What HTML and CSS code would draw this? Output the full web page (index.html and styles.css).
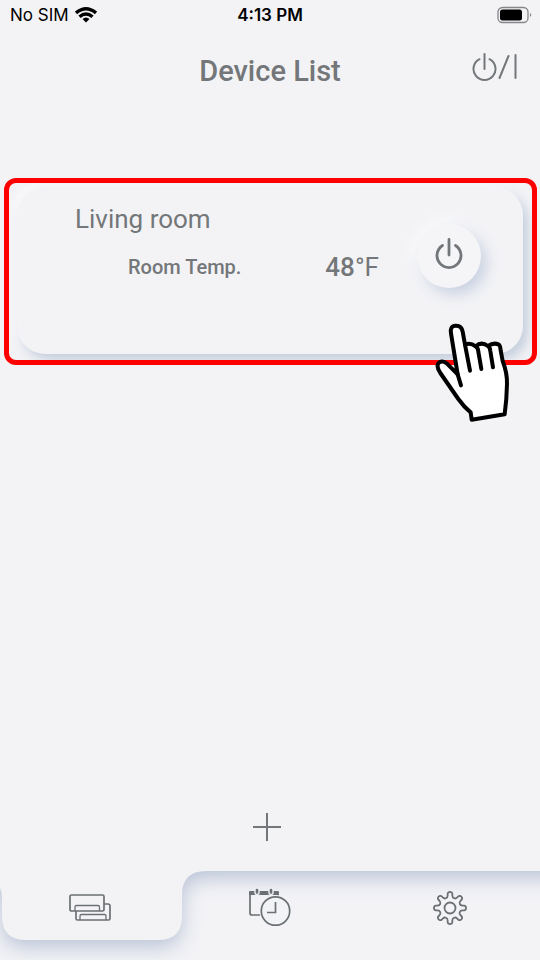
FILE: index.html
```html
<!DOCTYPE html>
<html lang="en">
<head>
<meta charset="utf-8">
<meta name="viewport" content="width=device-width, initial-scale=1">
<title>Device List</title>
<link rel="stylesheet" href="styles.css">
</head>
<body>
<div class="status">
  <div class="carrier">
    <span>No SIM</span>
    <svg width="22" height="16" viewBox="0 0 22 16" fill="none" stroke="#000" stroke-width="3.400">
      <path d="M1 6Q11-2.400 21 6M4.500 9.800Q11 4.300 17.500 9.800"/>
      <path d="M11 15.500L7.500 12Q11 9 14.500 12Z" fill="#000" stroke="none"/>
    </svg>
  </div>
  <time>4:13 PM</time>
  <svg class="battery" width="36" height="18" viewBox="0 0 36 18" fill="none">
    <rect x="2" y="1.500" width="30" height="15" rx="4.500" stroke="#85868a" stroke-width="1.300"/>
    <rect x="4" y="3.500" width="22" height="11" rx="2.500" fill="#000"/>
    <path d="M34 7Q36.500 9 34 11Z" fill="#85868a"/>
  </svg>
</div>

<header class="header">
  <h1>Device List</h1>
  <button class="all-power" aria-label="All devices on or off">
    <svg width="48" height="30" viewBox="0 0 48 30" fill="none" stroke="#737779" stroke-width="2" stroke-linecap="round">
      <path d="M7.500 7.200A11 11 0 1 0 17.500 7.200M12.500 2V17M36.500 4L27.500 26M43.500 3V26"/>
    </svg>
  </button>
</header>

<main class="main">
  <section class="highlight">
    <div class="frame">
      <article class="card">
        <div class="info">
          <h2>Living room</h2>
          <div class="reading">
            <span class="label">Room Temp.</span>
            <span class="temp"><b>48</b>°F</span>
          </div>
        </div>
        <button class="power" aria-label="Living room power">
          <svg width="32" height="34" viewBox="0 0 32 34" fill="none" stroke="#737779" stroke-width="2.800" stroke-linecap="round">
            <path d="M9.500 8.500A12 12 0 1 0 22.500 8.500M16 2.500V18"/>
          </svg>
        </button>
      </article>
    </div>
    <svg class="hand" width="110" height="120" viewBox="0 0 330 360" fill="#fff" stroke="#000" stroke-width="12" stroke-linejoin="round" stroke-linecap="round">
      <path d="M155 329L152 307Q132 291 115 267L61 189Q46 165 58 157Q70 150 81 161L113 193L93 70Q89 48 107 47Q125 46 128 65L135 104Q151 97 167 109Q184 93 204 108Q220 97 235 103Q241 106 242 121L248 153Q262 190 261 222Q260 270 254 313Z"/>
      <path fill="none" d="M113 193L123 226M135 104L150 182M167 109Q174 112 175 125L184 177M204 108Q210 112 211 123L219 172"/>
    </svg>
  </section>
  <button class="add" aria-label="Add device">
    <svg width="30" height="30" viewBox="0 0 30 30" fill="none" stroke="#737779" stroke-width="2"><path d="M15 1V29M1 15H29"/></svg>
  </button>
</main>

<nav class="tabs">
  <svg class="surface" viewBox="0 0 540 89" preserveAspectRatio="none">
    <path class="sheet" d="M-60-60H600V0H206Q182 0 182 24V45Q182 69 158 69H26Q2 69 2 45V26Q2 16-6 10H-60Z"/>
  </svg>
  <a href="#devices" aria-label="Devices" aria-current="page">
    <svg width="44" height="30" viewBox="0 0 44 30" fill="none" stroke="#6c7073" stroke-width="1.700" stroke-linejoin="round">
      <rect x="2" y="2" width="34" height="16" rx="1.500"/>
      <path d="M7 18V14Q7 12.500 8.500 12.500H30Q31.500 12.500 31.500 14V18" stroke-width="1.300"/>
      <path d="M36 11H40Q42 11 42 13V25.500Q42 27 40.500 27H9.500Q8 27 8 25.500V18"/>
      <path d="M12 27V23Q12 21.500 13.500 21.500H36.500Q38 21.500 38 23V27" stroke-width="1.300"/>
    </svg>
  </a>
  <a href="#schedule" aria-label="Schedule">
    <svg width="44" height="42" viewBox="0 0 44 42" fill="none" stroke="#6c7073" stroke-width="1.700">
      <path d="M13 28H4Q2 28 2 26V5H30V10"/>
      <path d="M1 8V6Q1 4 3 4H28Q30.800 4 30.800 6V8Z" fill="#6c7073" stroke="none"/>
      <path d="M9 2V5.500M23 2V5.500" stroke="#ebedf2" stroke-width="5.500" stroke-linecap="round"/>
      <path d="M9 3V5.500M23 3V5.500" stroke-width="2.600" stroke-linecap="round"/>
      <circle cx="27.500" cy="24" r="16" fill="#f2f3f6" stroke="none"/>
      <circle cx="27.500" cy="24" r="14.200"/>
      <path d="M27.500 15V25.500H19"/>
    </svg>
  </a>
  <a href="#settings" aria-label="Settings">
    <svg width="36" height="36" viewBox="0 0 36 36" fill="none" stroke="#6c7073" stroke-width="1.800" stroke-linejoin="round">
      <circle cx="18" cy="18" r="5.500"/>
      <path id="gear" d=""/>
    </svg>
  </a>
</nav>
<script src="gear.js"></script>
</body>
</html>
```
FILE: gear.js
```js
// Eight rounded teeth around the hub, joined by curved valleys.
const centre = 18;
const at = (radius, degrees) => {
  const a = degrees * Math.PI / 180;
  return `${(centre + radius * Math.cos(a)).toFixed(2)} ${(centre + radius * Math.sin(a)).toFixed(2)}`;
};
let d = `M${at(12.8, -10.5)}`;
for (let i = 0; i < 8; i++) {
  const t = i * 45;
  d += `L${at(14.2, t - 9.5)}C${at(16.9, t - 8.5)} ${at(16.9, t + 8.5)} ${at(14.2, t + 9.5)}`;
  d += `L${at(12.8, t + 10.5)}C${at(10, t + 14)} ${at(10, t + 31)} ${at(12.8, t + 34.5)}`;
}
document.getElementById("gear").setAttribute("d", d + "Z");
```
FILE: styles.css
```css
* { box-sizing: border-box; }
body {
  margin: 0;
  min-height: 100vh;
  display: flex;
  flex-direction: column;
  background: #f3f3f6;
  color: #737779;
  font-family: Roboto, sans-serif;
}
h1, h2 { margin: 0; }
button { border: 0; padding: 0; background: none; }
svg { display: block; }

.status {
  display: grid;
  grid-template-columns: 1fr auto 1fr;
  align-items: center;
  height: 30px;
  padding: 0 8px 0 8px;
  color: #000;
  font-family: Inter, sans-serif;
  font-size: 17px;
}
.status time { font-weight: 600; }
.carrier { display: flex; align-items: center; gap: 6px; padding-left: 2px; }
.battery { justify-self: end; }

.header {
  display: grid;
  grid-template-columns: 1fr auto 1fr;
  align-items: center;
  height: 82px;
  padding: 0 20px;
}
.header h1 { grid-column: 2; font-size: 29px; font-weight: 500; }
.all-power { justify-self: end; margin-bottom: 8px; }

.main { flex: 1; display: flex; flex-direction: column; padding: 66px 3px 29px 4px; }
.highlight { position: relative; }
.frame {
  border: 5px solid #f00;
  border-radius: 12px;
  padding: 4px 9px 6px 8px;
  overflow: hidden;
}
.card {
  display: flex;
  align-items: flex-start;
  min-height: 167px;
  padding: 16px 42px 16px 58px;
  border-radius: 28px;
  background: #f3f3f6;
  box-shadow: 5px 6px 12px #c4cedd, -3px -3px 8px #fbfbfd;
}
.info { flex: 1; }
.info h2 { font-size: 26px; font-weight: 400; line-height: 32px; }
.reading {
  display: flex;
  justify-content: space-between;
  align-items: center;
  margin-top: 14px;
  padding: 0 38px 0 53px;
  line-height: 36px;
}
.label { font-size: 20px; font-weight: 500; }
.temp { font-size: 26px; }
.temp b { font-weight: 500; }
.power {
  display: grid;
  place-items: center;
  width: 64px;
  height: 64px;
  margin-top: 21px;
  border-radius: 50%;
  background: #f5f5f8;
  box-shadow: 6px 7px 14px #cbd3e2, -5px -5px 12px #f9f9fb;
}
.power svg { margin-bottom: 4px; }
.hand { position: absolute; right: 7px; bottom: -65px; }
.add { align-self: center; margin: auto 7px 0 0; }

.tabs {
  position: relative;
  display: grid;
  grid-template-columns: repeat(3, 1fr);
  height: 89px;
  overflow: hidden;
}
.tabs a { position: relative; display: grid; place-items: center; padding-bottom: 16px; }
.surface { position: absolute; inset: 0; width: 100%; height: 100%; overflow: visible; }
.sheet { fill: #f3f3f6; filter: drop-shadow(0 7px 10px #b9c3d6); }
```
